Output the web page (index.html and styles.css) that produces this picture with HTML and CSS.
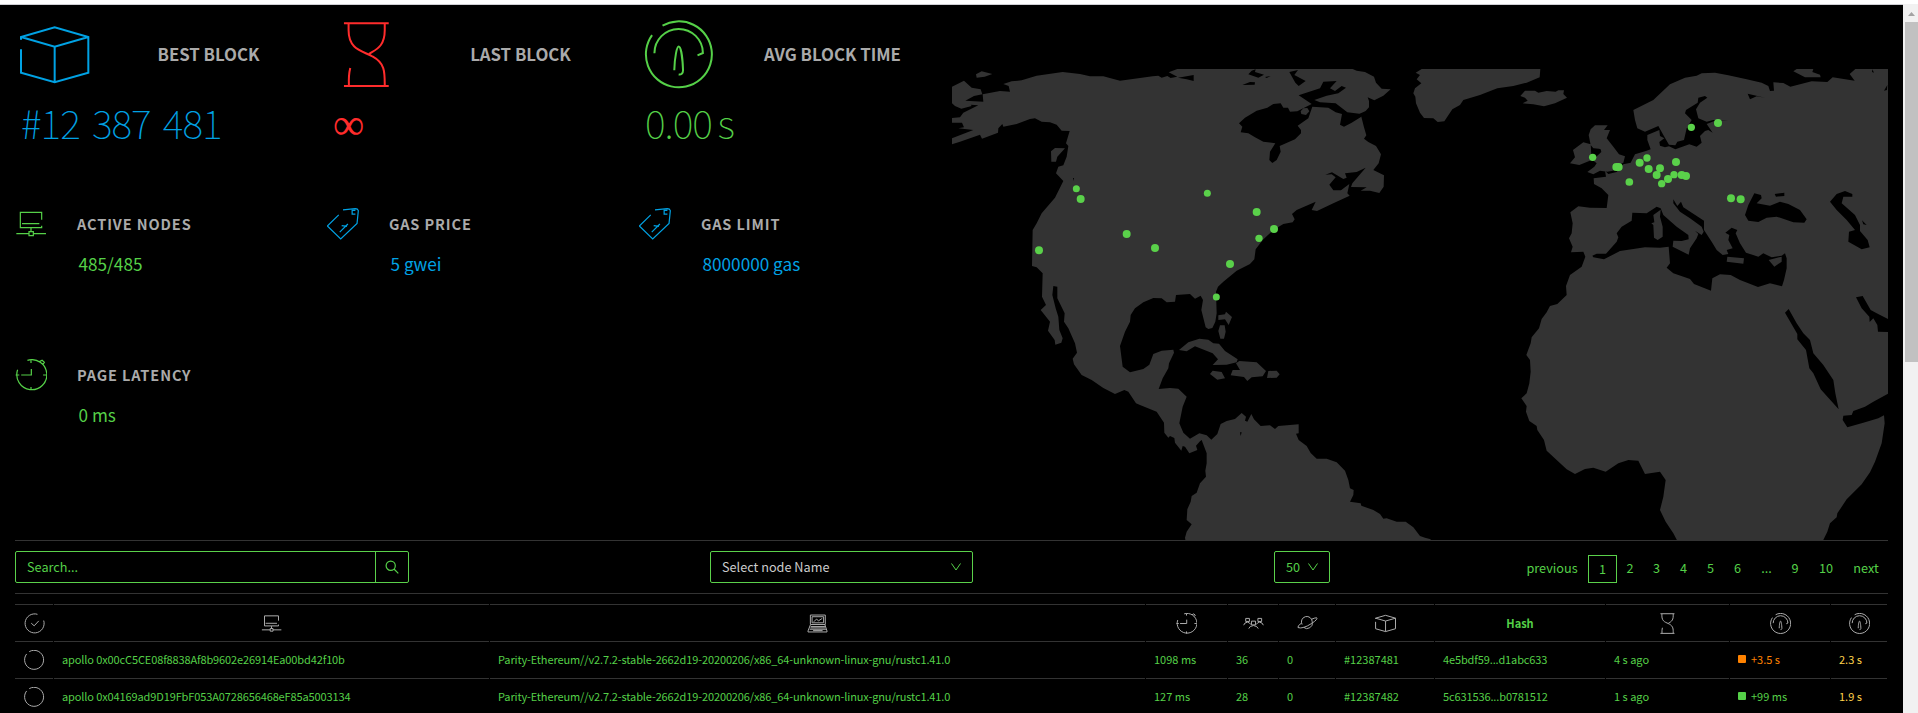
FILE: index.html
```html
<!DOCTYPE html>
<html lang="en">
<head>
<meta charset="utf-8">
<title>Network status</title>
<link rel="stylesheet" href="styles.css">
</head>
<body>
<svg class="defs" width="0" height="0">
  <symbol id="cube" viewBox="57 76 213 174"><path d="M63 117V109L164 80L265 109V216L164 245L63 216V146M63 109L164 138L265 109M164 138V245"/></symbol>
  <symbol id="glass" viewBox="1030 62 140 202"><path d="M1032 69H1167M1032 258H1167M1046 71V90C1046 150 1090 152 1118 169C1156 190 1155 215 1155 256M1155 71V90C1155 140 1128 148 1108 161M1047 256C1046 235 1047 220 1051 204"/></symbol>
  <symbol id="gauge" viewBox="494 61 205 205"><path d="M549 78A98 98 0 1 1 518 106M525 160A72 72 0 0 1 669 159L653 166M584 210C585 170 592 140 597 140C604 140 609 180 610 210C610 220 604 224 597 223"/></symbol>
  <symbol id="node" viewBox="45 624 96 96"><path d="M125 659V637H61V683H125V677M66 671H118M93 684V694M49 701H87M99 701H138M87 695H100V707H87Z"/></symbol>
  <symbol id="tag" viewBox="981 624 98 98"><path d="M1017 645L982 679L1023 719L1073 671L1077 632Q1075 626 1068 626L1030 630M1068 631H1058V643H1068M1020 698L1045 673M1026 678L1042 680"/></symbol>
  <symbol id="clock" viewBox="44 176 98 98"><path d="M82 180A46 46 0 1 1 52 209M93 178V188M93 262V272M46 225H57M130 225H140M94 207V225H63M119 184L127 180L134 186L130 192"/></symbol>
  <symbol id="check" viewBox="72 248 64 64"><path d="M113 252A29 29 0 1 0 132 271M94 279L103 287L117 272"/></symbol>
  <symbol id="ring" viewBox="72 359 64 64"><path d="M88 364A29 29 0 1 1 80 371"/></symbol>
  <symbol id="laptop" viewBox="982 248 62 62"><path d="M992 282V254H1036V282ZM997 277V259H1031V277ZM1002 274L1010 266L1016 271L1027 264M992 283L985 301V304H1041V301L1035 283M993 288H1035M992 292H1036M990 296H1038M1000 300H1028"/></symbol>
  <symbol id="peers" viewBox="848 248 62 62"><path d="M856 264H867V273H856ZM892 264H903V273H892ZM873 272H885V283H873ZM850 284Q852 276 861 275Q868 276 871 282M908 284Q906 276 897 275Q890 276 887 282M865 294Q867 286 879 285Q890 286 893 294"/></symbol>
  <symbol id="planet" viewBox="1011 248 62 62"><path d="M1026 282A16 16 0 1 1 1056 274A16 16 0 0 1 1030 290M1024 278Q1011 287 1014 291Q1028 296 1054 279Q1074 266 1069 262Q1063 262 1053 267"/></symbol>
</svg>
<div class="page">
  <main class="screen">
    <section class="hero">
      <div class="stats">
        <div class="primary blue"><span class="big-icon"><svg class="w-cube"><use href="#cube"/></svg></span><span class="title">BEST BLOCK</span><span class="big">#12 387 481</span></div>
        <div class="primary red"><span class="big-icon"><svg class="w-glass"><use href="#glass"/></svg></span><span class="title">LAST BLOCK</span><span class="big inf">∞</span></div>
        <div class="primary green"><span class="big-icon"><svg class="w-gauge"><use href="#gauge"/></svg></span><span class="title">AVG BLOCK TIME</span><span class="big sec">0.00 s</span></div>
        <div class="small green"><svg><use href="#node"/></svg><span class="label">ACTIVE NODES</span><span class="value">485/485</span></div>
        <div class="small blue"><svg><use href="#tag"/></svg><span class="label">GAS PRICE</span><span class="value">5 gwei</span></div>
        <div class="small blue"><svg><use href="#tag"/></svg><span class="label">GAS LIMIT</span><span class="value">8000000 gas</span></div>
        <div class="small green"><svg><use href="#clock"/></svg><span class="label">PAGE LATENCY</span><span class="value">0 ms</span></div>
      </div>
      <svg class="map" viewBox="952 69 936 471">
        <g transform="translate(940 50) scale(.333333)">
          <path class="land" d="M36 110L72 92L95 113L122 118L127 133L102 138L76 152L130 155L128 133L180 123L210 125L206 108L190 102L215 94L245 91L290 77L368 66L420 72L450 79L490 79L540 92L600 84L638 79L655 77L665 83L682 78L692 84L712 80L686 67L712 57H1238L1250 62L1275 66L1302 80L1308 98L1325 116L1352 118L1330 137L1303 151L1283 142L1287 153V172L1277 183L1259 191L1264 200L1272 232L1279 256L1272 266L1285 276L1308 288L1323 313L1316 340L1300 360L1332 376L1331 410L1318 429L1290 422L1262 422L1280 412L1233 411L1237 400L1277 353L1250 366L1215 370L1220 383L1210 387L1176 367L1156 374L1175 373L1187 382L1168 404L1180 421L1203 421L1228 402L1222 430L1229 437L1180 460L1131 483L1115 480L1127 455L1070 480L1056 492L1064 508L1058 517L1030 522L1000 540L968 570L947 598L943 628L930 642L890 662L850 695L834 710L828 725L830 790L826 815L817 834L805 837L797 832L784 780L789 750L782 737L765 746L750 732L708 735L705 755L680 757L665 745L640 744L610 757L585 775L572 795L570 815L555 845L540 888L548 950L570 967L610 957L628 944L640 912L665 902L700 899L702 908L687 940L685 955L668 985L656 1017L690 1014L715 1016L740 1040L728 1070L718 1120L730 1148L750 1166L778 1150L800 1156L814 1169L832 1152L842 1122L860 1113L885 1107L905 1089L918 1100L915 1112L922 1115L934 1092L942 1108L962 1128L990 1126L1005 1137L1015 1128L1076 1123V1150L1068 1151L1076 1170L1100 1188L1112 1209L1130 1226L1160 1226L1190 1237L1215 1262L1225 1290L1230 1315L1241 1320L1240 1335L1230 1355L1262 1360L1264 1367L1300 1380L1320 1392L1330 1406L1340 1405L1370 1415L1397 1415L1420 1432L1440 1458L1455 1463L1472 1468V1480H738L735 1463L740 1445L755 1423L740 1410L742 1378L752 1355L755 1338L770 1328L780 1300L798 1280L796 1262L800 1240V1210L785 1170L780 1174L768 1187L772 1200L748 1210L735 1190L728 1188L724 1202L705 1178L703 1164L690 1158L685 1163L673 1148L672 1118L650 1085L600 1065L588 1060L565 1025L553 1020L525 1032L490 1014L455 990L425 975L402 943L398 926L411 908L405 880L385 835L372 815L374 790L352 745V710L340 708L337 735L347 775L355 800L358 840L368 865L364 878L346 884L344 870L324 842L330 815L302 780L318 765L306 740L308 670L290 652L276 648L278 540L290 520L305 490L345 443L370 393L348 370L355 350L370 346L380 320L385 288L378 280L389 243L365 242L350 224L330 217L305 215L285 205L270 207L230 222L190 230L187 222L175 235L174 248L126 266L120 254L60 275L36 283V265L100 240L55 235L72 232L66 218L36 218V204L60 202L70 188L115 166L92 164L95 168L64 176L45 168L36 160ZM108 73L125 64L157 72L134 80L110 83ZM333 304L345 294L375 295L352 320L348 335H334Z"/>
          <path class="land" transform="translate(0 720)" d="M717 180L745 157L778 146L805 149L820 160L837 161L855 183L893 208L890 217L860 224L818 225L834 208L818 190L765 169L740 184ZM810 252L818 242L845 246L855 265L832 269ZM872 256L878 240L900 240L888 220L898 213L950 217L978 243L968 259L935 262L922 273L912 261ZM981 264L985 243L1010 242L1019 253L1010 263ZM835 76L855 73L858 65L876 81L866 105L855 88L835 90ZM840 106H854L857 125L852 146H841L835 123Z"/>
          <path class="water" d="M897 220L915 203L950 182L982 173L1000 162L1022 160L1030 173L1044 173L1050 185L1072 184L1115 162L1076 136L1140 115L1150 95L1190 93L1170 115L1185 123L1205 108L1218 113L1195 130L1160 137L1123 150L1140 157L1187 160L1222 187L1264 192V200L1235 218L1212 230L1200 224L1206 192L1187 187L1165 173L1117 170L1105 205L1073 227L1083 240V250L1065 268L1019 288L1022 305L1010 330L997 339L988 330L990 305L1006 280L970 275L945 262L925 250L902 247L907 230ZM714 83L761 75V93L740 88ZM925 73L935 62L947 58L945 66L972 74L955 83ZM1048 66L1074 60L1063 75L1097 93L1076 108L1066 98ZM907 105L930 96L945 97L944 104ZM975 81L992 78L980 84ZM900 1147H905L902 1158ZM399 384H402L401 393Z"/>
          <path class="land" d="M1082 184L1090 175L1102 174L1108 184L1098 195L1084 192Z"/>
          <g class="pin"><circle cx="409" cy="416" r="10.5"/><circle cx="422" cy="447" r="12"/><circle cx="802" cy="430" r="10.5"/><circle cx="950" cy="486" r="12"/><circle cx="1002" cy="537" r="12"/><circle cx="957" cy="565" r="11"/><circle cx="560" cy="552" r="12"/><circle cx="645" cy="594" r="12"/><circle cx="297" cy="601" r="12"/><circle cx="870" cy="642" r="12"/><circle cx="829" cy="741" r="10.5"/></g>
        </g>
        <g transform="translate(1400 50) scale(.333333)">
          <path class="land" d="M65 57H421L419 82L380 98L340 108L292 115L240 135L190 150L180 165L157 178L133 214L113 216L100 205L72 204L60 188L48 160L46 140L40 130L45 115L64 100L50 88L60 75L47 68ZM361 138L375 122H405L415 128L440 123L467 125L475 121H492L490 132L501 143L465 160L432 169L400 163L368 160L383 152L375 143ZM566 255L572 238L585 226L623 226L612 240L630 240L620 265L640 290L657 313L675 319L670 338L655 345L650 360L622 365L600 362L580 373L562 366L583 350L590 340L578 330L604 306L602 298L580 295L572 285ZM519 300L550 277L572 283L575 330L538 345L510 340L525 322ZM1180 64L1190 57H1240L1237 66L1260 74L1262 82L1215 82Z"/>
          <path class="land" d="M513 607L518 590L507 565L515 550L518 520L511 487L535 469L570 473L620 474L625 435L605 415L582 402L581 385L618 380L615 362L625 372L650 366L670 343L692 338L705 313L740 302L752 298L742 270V255L778 240L780 258L793 265L778 276L780 287L795 292L807 289L826 298L868 283L890 290L905 278L900 258L915 243L925 240L938 248L920 222L945 212L985 211L940 210L920 215L895 205L888 178L900 158L922 143L915 138L895 143L893 158L858 180L855 190L875 210L860 235L852 270L832 275L826 286L807 284L790 255L775 228L735 245L712 235L705 210L700 180L760 150L810 103L855 83L890 77L905 70L945 68L985 76L1040 88L1085 98L1105 108L1110 123L1122 122L1120 97L1150 99L1171 110L1235 94L1282 96L1298 82L1364 92L1349 72L1366 57H1464V807L1430 790L1412 780L1388 738L1368 742L1385 775L1408 800L1409 816L1420 805L1432 825L1434 845L1464 846V1031L1420 1055L1395 1070L1360 1083L1355 1095L1330 1097L1328 1110L1342 1132L1390 1118L1435 1105L1452 1096L1454 1120L1445 1180L1425 1235L1410 1267L1385 1303L1340 1348L1312 1390L1310 1402L1290 1420L1282 1445L1265 1480H836L820 1450L797 1415L780 1380L790 1340L797 1290L780 1265L735 1272L715 1232L685 1230L655 1240L617 1265L580 1253L555 1257L525 1272L500 1258L440 1202L432 1170L412 1140L410 1128L388 1113L378 1085L380 1068L364 1045L380 1030L388 1000L392 965L390 930L379 915L392 880L395 862L417 835L425 807L440 787L450 768L472 762L500 735L498 708L510 675L545 650L556 620L550 605Z"/>
          <path class="water" d="M577 617L590 611H618L650 575L655 562L650 550L665 530L695 512L697 488L740 490L770 470L782 475L790 495L830 530L865 555L866 568L845 573L820 572L818 590L866 614L870 595L890 565L895 552L885 542L905 555L911 545L905 530L870 505L840 485L820 460V448L832 468L843 455L850 472L912 512V540L935 575L950 600L968 615L985 612L980 600L998 595L985 570L988 555L976 548L995 533L1012 540L1007 550L1020 580L1038 608L1075 620L1090 610L1115 622L1145 617L1155 610L1160 625V655L1152 690L1146 709L1110 700L1074 711L1020 690L992 675L960 673L937 685L933 722L882 702L870 687L820 670L800 653L810 640L806 590L780 593L735 592L660 603L612 628L580 622ZM1063 430L1083 435L1085 445L1070 460L1110 467L1140 455L1165 462L1200 480L1220 508L1213 518L1180 517L1130 500L1100 503L1075 516L1045 512L1035 495L1045 465ZM1124 432L1153 428V438L1128 440ZM1290 455L1310 432L1335 423L1357 432V440L1330 440L1325 460L1365 495L1380 525V543L1403 570L1409 592L1385 598L1345 575L1347 545L1365 540L1340 510L1310 480ZM1155 788L1166 777L1190 820L1210 850L1230 870L1240 910L1270 945L1300 990L1306 1030L1316 1078L1262 1018L1240 970L1228 955L1218 900L1192 868V852ZM1043 131L1095 143L1070 139L1050 148ZM1386 511L1400 525L1390 523ZM1417 58L1422 68L1416 66ZM1452 122L1462 105L1461 120ZM573 305L580 296H598L603 305L582 303Z"/>
          <path class="land" d="M782 479L780 500L788 530V560L773 570L762 563L760 525L754 520L763 517L760 495ZM982 620L1032 625L1030 641L980 635ZM1106 630L1145 620V635L1123 650Z"/>
          <g class="pin"><circle cx="578" cy="322" r="11"/><circle cx="649" cy="351" r="12"/><circle cx="656" cy="351" r="12"/><circle cx="688" cy="396" r="11.5"/><circle cx="719" cy="338" r="12"/><circle cx="741" cy="324" r="11"/><circle cx="746" cy="357" r="12"/><circle cx="770" cy="375" r="12"/><circle cx="780" cy="355" r="12"/><circle cx="828" cy="336" r="12"/><circle cx="822" cy="374" r="11"/><circle cx="804" cy="387" r="12"/><circle cx="785" cy="401" r="11"/><circle cx="845" cy="375" r="12"/><circle cx="858" cy="378" r="12"/><circle cx="874" cy="232" r="11"/><circle cx="954" cy="219" r="12"/><circle cx="993" cy="445" r="12"/><circle cx="1022" cy="448" r="12"/></g>
        </g>
      </svg>
    </section>
    <section class="toolbar">
      <div class="search"><span>Search...</span><i><svg viewBox="0 0 14 14"><circle cx="5.7" cy="5.7" r="4.6"/><path d="M9 9L13.3 13.3"/></svg></i></div>
      <div class="select name"><span>Select node Name</span><svg viewBox="0 0 10 8"><path d="M.5 .5L5 7L9.5 .5"/></svg></div>
      <div class="select count"><span>50</span><svg viewBox="0 0 10 8"><path d="M.5 .5L5 7L9.5 .5"/></svg></div>
      <nav class="pages"><a class="prev">previous</a><a class="current">1</a><a class="two">2</a><a>3</a><a>4</a><a>5</a><a>6</a><a class="dots">...</a><a class="two">9</a><a class="ten">10</a><a class="next">next</a></nav>
    </section>
    <section class="table">
      <div class="row head"><b><svg><use href="#check"/></svg></b><b><svg><use href="#node"/></svg></b><b><svg><use href="#laptop"/></svg></b><b><svg><use href="#clock"/></svg></b><b><svg><use href="#peers"/></svg></b><b><svg><use href="#planet"/></svg></b><b><svg><use href="#cube"/></svg></b><b>Hash</b><b><svg><use href="#glass"/></svg></b><b><svg><use href="#gauge"/></svg></b><b><svg><use href="#gauge"/></svg></b></div>
      <div class="row"><span class="status"><svg><use href="#ring"/></svg></span><span class="long">apollo 0x00cC5CE08f8838Af8b9602e26914Ea00bd42f10b</span><span class="long">Parity-Ethereum//v2.7.2-stable-2662d19-20200206/x86_64-unknown-linux-gnu/rustc1.41.0</span><span>1098 ms</span><span>36</span><span>0</span><span>#12387481</span><span class="long">4e5bdf59...d1abc633</span><span>4 s ago</span><span class="orange"><i class="dot"></i>+3.5 s</span><span class="yellow">2.3 s</span></div>
      <div class="row"><span class="status"><svg><use href="#ring"/></svg></span><span class="long">apollo 0x04169ad9D19FbF053A0728656468eF85a5003134</span><span class="long">Parity-Ethereum//v2.7.2-stable-2662d19-20200206/x86_64-unknown-linux-gnu/rustc1.41.0</span><span>127 ms</span><span>28</span><span>0</span><span>#12387482</span><span class="long">5c631536...b0781512</span><span>1 s ago</span><span><i class="dot"></i>+99 ms</span><span class="yellow">1.9 s</span></div>
    </section>
  </main>
  <aside class="scrollbar"><svg viewBox="0 0 7 4"><path d="M0 4L3.5 0L7 4Z"/></svg><div class="thumb"></div></aside>
</div>
</body>
</html>
```
FILE: styles.css
```css
* { box-sizing: border-box; }
body { margin: 0; overflow: hidden; background: #fff; color: #55d048; font-family: "Noto Sans CJK SC", "Open Sans", sans-serif; }
svg { display: block; fill: none; stroke: currentColor; }
.defs { position: absolute; }
symbol path { vector-effect: non-scaling-stroke; }
.page { display: flex; height: 713px; padding-top: 4px; }
.screen { flex: 1; min-width: 0; overflow: hidden; background: #000; border-top: 1px solid #cfcfd4; padding: 0 15px; }
.hero { display: flex; justify-content: space-between; height: 535px; }
.stats { display: grid; grid-template-columns: repeat(3, 312px); grid-template-rows: 187px 151px 151px; align-content: start; }
.primary { display: grid; grid-template-columns: 79px 229px; grid-template-rows: 99px 40px; align-content: start; }
.big-icon { display: flex; align-items: center; justify-content: center; stroke-width: 2px; }
.w-cube { width: 71px; height: 58px; }
.w-glass { width: 47px; height: 67px; }
.w-gauge { width: 69px; height: 69px; }
.title { align-self: center; padding-bottom: 2px; text-align: center; color: #aaa; font-size: 16.8px; font-weight: 700; line-height: 24px; }
.big { grid-column: 1 / 3; padding-left: 6px; font-size: 39.5px; font-weight: 100; line-height: 36px; letter-spacing: -1px; word-spacing: 4.5px; white-space: nowrap; }
.sec { word-spacing: -2px; }
.inf { font-family: "Liberation Serif", serif; font-size: 44px; font-weight: 400; line-height: 41px; }
.small { display: grid; grid-template-columns: 32px 1fr; grid-template-rows: 64px 20px; column-gap: 30px; align-content: start; }
.small svg { width: 32px; height: 32px; align-self: center; stroke-width: 1.2px; }
.label { align-self: center; color: #aaa; font-size: 14.5px; font-weight: 700; letter-spacing: .9px; line-height: 20px; }
.value { grid-column: 2; padding-left: 1.5px; font-size: 17.2px; line-height: 16px; }
.blue { color: #00a2e4; }
.red { color: #ff2c2c; }
.green { color: #55d048; }
.map { width: 936px; height: 471px; margin-top: 64px; overflow: hidden; }
.land { fill: #333; stroke: none; }
.water { fill: #000; stroke: none; }
.pin { fill: #5ad14a; stroke: none; }
.toolbar { display: flex; height: 54px; border: solid #333; border-width: 1px 0; padding-top: 10px; font-size: 12.7px; }
.search, .select { display: flex; align-items: center; height: 32px; border: 1px solid #5ad14a; border-radius: 2px; }
.search { width: 394px; }
.search span { flex: 1; padding: 0 0 1px 11px; }
.search i { display: flex; align-items: center; justify-content: center; width: 33px; height: 30px; border-left: 1px solid #5ad14a; }
.search svg { width: 14px; height: 14px; stroke-width: 1.2px; }
.select { justify-content: space-between; padding: 0 11px; }
.select span { padding-bottom: 1px; }
.select svg { width: 10px; height: 8px; }
.name { width: 263px; margin-left: 301px; }
.name span { color: #ccc; }
.count { width: 56px; margin-left: 301px; }
.pages { display: flex; margin-left: auto; padding-top: 4px; line-height: 26px; text-align: center; }
.pages a { width: 27px; height: 28px; }
.pages .prev { width: 72px; }
.pages .current { width: 29px; border: 1px solid #5ad14a; }
.pages .two { width: 26px; }
.pages .dots { width: 31px; }
.pages .ten { width: 36px; }
.pages .next { width: 44px; }
.table { margin-top: 10px; font-size: 11px; }
.row { display: grid; grid-template-columns: 38px 435px 655px 81px 50px 56px 98px 170px 123px 100px 56px; column-gap: 1px; height: 37px; }
.row > * { display: flex; align-items: center; border-top: 1px solid #333; padding: 0 0 2px 8px; white-space: nowrap; }
.row .status, .head b { justify-content: center; padding: 0; }
.row .long { letter-spacing: -.12px; }
.row svg { width: 21px; height: 21px; stroke: #aaa; stroke-width: 1px; }
.dot { width: 8px; height: 8px; margin-right: 5px; border-radius: 1px; background: currentColor; }
.orange { color: #ff8200; }
.yellow { color: #ffd24a; }
.scrollbar { width: 15px; background: #f1f1f1; }
.scrollbar svg { width: 7px; height: 4px; margin: 8px 0 6px 5px; fill: #a3a3a3; stroke: none; }
.thumb { width: 13px; height: 340px; margin-left: 2px; background: #c1c1c1; }
```
